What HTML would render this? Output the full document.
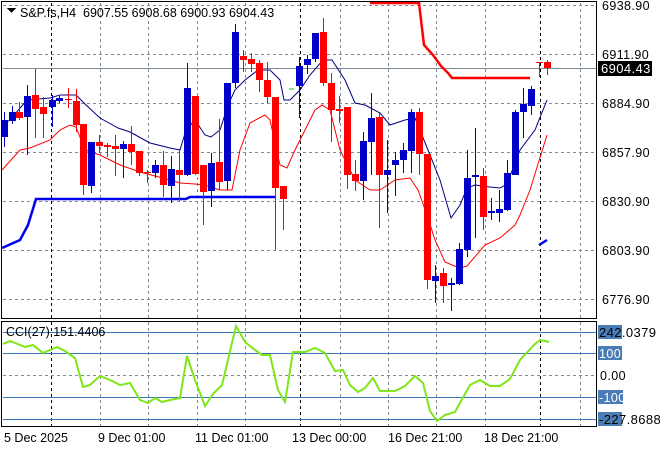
<html><head><style>body{margin:0;background:#fff}svg{display:block}text{font-family:"Liberation Sans",sans-serif;font-size:12.5px}.ax{font-size:13px;letter-spacing:0.4px}</style></head><body>
<svg width="660" height="450" viewBox="0 0 660 450" xmlns="http://www.w3.org/2000/svg" shape-rendering="crispEdges">
<rect width="660" height="450" fill="#fff"/>
<g stroke="#7f8a95" stroke-dasharray="3,3" stroke-width="1">
<path d="M3 5.5H596M3 54.5H596M3 103.5H596M3 152.5H596M3 201.5H596M3 250.5H596M3 299.5H596"/>
<path d="M100.5 3V318M148.5 3V318M197.5 3V318M245.5 3V318M340.5 3V318M388.5 3V318M436.5 3V318M485.5 3V318M580.5 3V318"/>
<path d="M100.5 322V426M148.5 322V426M197.5 322V426M245.5 322V426M340.5 322V426M388.5 322V426M436.5 322V426M485.5 322V426M580.5 322V426"/>
<path d="M3 375.5H596"/>
</g>
<g stroke="#000" stroke-dasharray="3,3"><path d="M51.5 3V318M300.5 3V318M540.5 3V318M51.5 322V426M300.5 322V426M540.5 322V426"/></g>
<path d="M3 68.5H596" stroke="#7f8a95"/>
<g stroke="#3d7ab8"><path d="M3 332.5H596M3 353.5H596M3 397.5H596M3 419.5H596"/></g>
<g shape-rendering="auto" fill="none">
<polyline stroke="#0000ee" stroke-width="2.5" points="2,248 20,240 28,225 36,199 186,199 190,197 275,197"/>
<polyline stroke="#0000ee" stroke-width="2.5" points="539,245 547,240"/>
<polyline stroke="#ff0000" stroke-width="2.5" points="370,3 419,3 424,45 433,55 441,66 448,73 452,78 530,78"/>
<polyline stroke="#000080" stroke-width="1" points="2,125 10,120 27,100 50,98 60,95 76,95 86,105 100,118 118,128 130,132 150,143 170,148 180,150 186,130 195,120 205,135 211,137 220,130 228,105 235,90 245,80 258,70 270,70 280,80 284,100 290,100 300,90 310,75 323,60 332,60 345,80 355,103 365,105 380,113 390,125 405,120 415,118 428,150 440,180 451,218 460,205 467,188 475,185 490,187 500,188 507,184 520,150 535,130 547,100"/>
<polyline stroke="#ff0000" stroke-width="1" points="2,170 20,150 30,148 50,140 60,130 70,125 76,127 85,150 100,155 120,165 140,172 170,180 180,183 195,184 205,185 220,190 232,190 240,150 250,123 265,115 270,120 280,165 287,168 295,150 305,130 315,110 322,105 330,110 340,150 355,180 370,190 380,190 395,180 410,178 418,190 427,215 435,240 445,262 452,265 460,268 467,266 485,245 500,238 515,225 520,215 530,190 547,135"/>
<polyline stroke="#7fe61a" stroke-width="2" points="3,344 10,341 25,347 33,345 43,353 57,347 65,351 75,358 83,387 90,385 100,376 110,380 120,385 130,383 140,400 148,403 155,398 162,402 170,400 180,398 187,356 195,380 205,406 213,394 222,385 236,326 245,342 255,350 262,355 270,355 278,390 285,402 293,352 305,352 315,348 325,353 335,371 343,370 350,385 358,392 365,388 373,378 380,391 395,391 405,386 415,376 423,383 430,411 437,421 445,415 455,412 470,385 480,380 490,386 500,386 510,379 520,360 535,344 540,340 549,342"/>
</g>
<path d="M289 89h5" stroke="#00cc00"/>
<path stroke="#0000c8" d="M4.5 112V147M12.5 106V124M27.5 85V155M52.5 95V127M59.5 96V103M91.5 142V193M123.5 141V178M155.5 160V178M171.5 156V203M187.5 63V176M211.5 153V207M227.5 83V190M235.5 24V88M299.5 57V118M307.5 55V74M315.5 33V62M363.5 132V200M371.5 93V175M387.5 140V213M395.5 152V196M403.5 143V173M411.5 109V173M435.5 265V303M451.5 278V311M459.5 243V285M467.5 150V257M475.5 128V238M491.5 198V220M499.5 190V222M507.5 160V211M515.5 110V175M523.5 88V138M531.5 86V115"/>
<path fill="#0000c8" d="M1 120h7v17h-7zM9 112h7v9h-7zM24 96h7v21h-7zM49 100h7v7h-7zM56 98h7v3h-7zM88 142h7v44h-7zM120 144h7v5h-7zM152 165h7v8h-7zM168 169h7v17h-7zM184 88h7v87h-7zM208 163h7v28h-7zM224 83h7v98h-7zM232 32h7v51h-7zM296 66h7v20h-7zM304 59h7v6h-7zM312 33h7v26h-7zM360 141h7v40h-7zM368 118h7v24h-7zM384 170h7v5h-7zM392 160h7v5h-7zM400 150h7v10h-7zM408 112h7v39h-7zM432 276h7v5h-7zM448 283h7v2h-7zM456 249h7v35h-7zM464 178h7v72h-7zM472 175h7v2h-7zM488 211h7v2h-7zM496 209h7v4h-7zM504 173h7v37h-7zM512 112h7v63h-7zM520 104h7v8h-7zM528 89h7v17h-7z"/>
<path stroke="#ff0000" d="M19.5 102V120M35.5 69V138M43.5 97V138M68.5 88V108M76.5 89V132M83.5 124V195M99.5 135V153M107.5 143V157M115.5 135V176M131.5 126V165M139.5 151V176M147.5 170V183M163.5 151V197M179.5 150V201M195.5 96V175M203.5 165V225M219.5 119V190M243.5 50V72M251.5 53V72M259.5 60V92M267.5 62V103M275.5 97V250M283.5 186V230M323.5 18V86M331.5 73V142M339.5 96V123M347.5 107V189M355.5 160V191M379.5 113V228M419.5 108V175M427.5 154V289M443.5 268V303M483.5 168V230M539.5 62V77M547.5 60V75"/>
<path fill="#ff0000" d="M16 112h7v6h-7zM32 95h7v14h-7zM40 107h7v7h-7zM65 99h7v1h-7zM73 101h7v24h-7zM80 124h7v61h-7zM96 142h7v4h-7zM104 145h7v2h-7zM112 146h7v3h-7zM128 144h7v8h-7zM136 151h7v22h-7zM144 172h7v1h-7zM160 165h7v20h-7zM176 170h7v5h-7zM192 96h7v78h-7zM200 165h7v27h-7zM216 162h7v20h-7zM240 56h7v4h-7zM248 59h7v5h-7zM256 63h7v17h-7zM264 80h7v17h-7zM272 97h7v91h-7zM280 186h7v13h-7zM320 32h7v51h-7zM328 83h7v27h-7zM336 109h7v2h-7zM344 107h7v68h-7zM352 174h7v7h-7zM376 117h7v58h-7zM416 112h7v42h-7zM424 154h7v126h-7zM440 273h7v13h-7zM480 176h7v41h-7zM536 62h7v1h-7zM544 62h7v6h-7z"/>
<rect x="1.5" y="1.5" width="595" height="317" fill="none" stroke="#000"/>
<rect x="1.5" y="321.5" width="595" height="105" fill="none" stroke="#000"/>
<g fill="#000">
<path d="M7 8h9l-4.5 5z"/>
<text x="20" y="17" xml:space="preserve">S&amp;P.fs,H4  6907.55 6908.68 6900.93 6904.43</text>
<g class="ax"><text x="602" y="10">6938.90</text><text x="602" y="59">6911.90</text><text x="602" y="108">6884.90</text><text x="602" y="157">6857.90</text><text x="602" y="206">6830.90</text><text x="602" y="255">6803.90</text><text x="602" y="304">6776.90</text>
<text x="600" y="380">0.00</text></g>
<text x="6" y="336">CCI(27) 151.4406</text>
<text x="4" y="442">5 Dec 2025</text><text x="98" y="442">9 Dec 01:00</text><text x="195" y="442">11 Dec 01:00</text><text x="292" y="442">13 Dec 00:00</text><text x="388" y="442">16 Dec 21:00</text><text x="484" y="442">18 Dec 21:00</text>
</g>
<rect x="598" y="61" width="54" height="15" fill="#000"/><text class="ax" x="601" y="73" fill="#fff">6904.43</text>
<g fill="#4a7db5"><rect x="598" y="325" width="24" height="14"/><rect x="598" y="346" width="24" height="14"/><rect x="598" y="390" width="25" height="14"/><rect x="598" y="412" width="24" height="14"/></g>
<g fill="#fff" class="ax"><text x="599" y="358">100</text><text x="599" y="402">-100</text></g>
<text class="ax" x="599" y="337">242.0379</text><text class="ax" x="599" y="424">-227.8688</text>
</svg>
</body></html>
